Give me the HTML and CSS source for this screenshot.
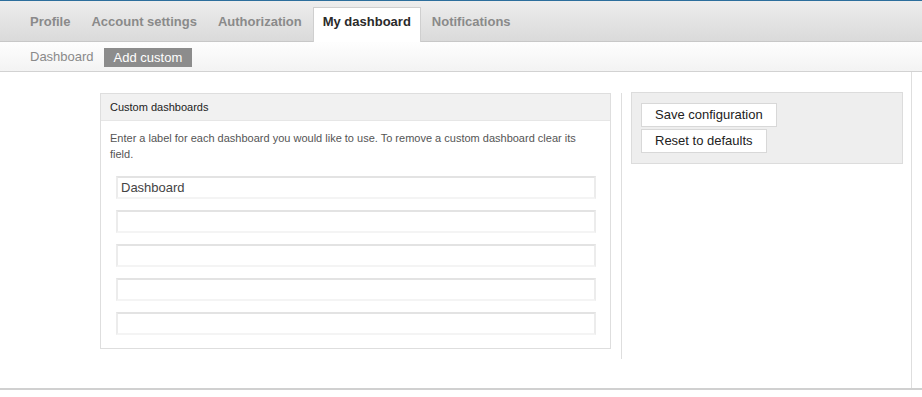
FILE: index.html
```html
<!DOCTYPE html>
<html>
<head>
<meta charset="utf-8">
<link rel="stylesheet" href="styles.css">
</head>
<body>
<div class="topline"></div>
<nav class="tabs">
  <a class="tab">Profile</a>
  <a class="tab">Account settings</a>
  <a class="tab">Authorization</a>
  <a class="tab active">My dashboard</a>
  <a class="tab">Notifications</a>
</nav>
<nav class="subtabs">
  <a class="subtab">Dashboard</a>
  <a class="subtab current">Add custom</a>
</nav>
<div class="page">
  <div class="content">
    <section class="panel">
      <div class="panel-head">Custom dashboards</div>
      <div class="panel-body">
        <p class="help">Enter a label for each dashboard you would like to use. To remove a custom dashboard clear its field.</p>
        <div class="fields">
          <input class="field" type="text" value="Dashboard">
          <input class="field" type="text" value="">
          <input class="field" type="text" value="">
          <input class="field" type="text" value="">
          <input class="field" type="text" value="">
        </div>
      </div>
    </section>
    <aside class="sidebar">
      <div class="actions">
        <button class="btn">Save configuration</button>
        <button class="btn">Reset to defaults</button>
      </div>
    </aside>
  </div>
</div>
</body>
</html>
```
FILE: styles.css
```css
* { box-sizing: border-box; }
html, body { margin: 0; padding: 0; background: #fff; }
body { font-family: "Liberation Sans", Arial, Helvetica, sans-serif; color: #333; width: 922px; height: 397px; overflow: hidden; }

.topline { height: 1px; background: #2c6e9c; }

.tabs {
  display: flex;
  align-items: flex-end;
  height: 41px;
  padding-left: 20px;
  background: linear-gradient(#ededed, #dadada);
  border-bottom: 1px solid #c8c8c8;
}
.tab {
  font-size: 13px;
  font-weight: bold;
  color: #8a8a8a;
  padding: 0 9px;
  margin-right: 1px;
  height: 34px;
  line-height: 28px;
  border: 1px solid transparent;
  border-bottom: none;
}
.tab.active {
  background: #fff;
  color: #2a2a2a;
  border-color: #cfcfcf;
  height: 35px;
  margin-bottom: -1px;
}

.subtabs {
  display: flex;
  align-items: center;
  height: 30px;
  padding-left: 30px;
  background: linear-gradient(#fefefe, #f3f3f3);
  border-bottom: 1px solid #d2d2d2;
}
.subtab {
  font-size: 13px;
  color: #8a8a8a;
  margin-right: 10px;
  line-height: 19px;
}
.subtab.current {
  background: #8c8c8c;
  color: #fff;
  padding: 0 10px;
  margin-top: 1px;
}

.page {
  width: 922px;
  height: 318px;
  border-bottom: 2px solid #d0d0d0;
}
.content {
  display: flex;
  align-items: flex-start;
  width: 912px;
  height: 100%;
  border-right: 1px solid #dedede;
  padding: 21px 0 0 100px;
}

.panel {
  width: 511px;
  border: 1px solid #dedede;
}
.panel-head {
  height: 27px;
  line-height: 26px;
  padding-left: 9px;
  font-size: 11px;
  color: #222;
  background: #f1f1f1;
  border-bottom: 1px solid #e6e6e6;
}
.panel-body {
  padding: 9px 14px 13px 9px;
}
.help {
  margin: 0;
  font-size: 11px;
  line-height: 16px;
  color: #555;
}
.fields {
  display: flex;
  flex-direction: column;
  gap: 11px;
  padding: 14px 0 0 6px;
}
.field {
  display: block;
  width: 480px;
  height: 23px;
  margin: 0;
  padding: 0 0 0 3px;
  font-family: "Liberation Sans", Arial, sans-serif;
  font-size: 13px;
  color: #444;
  background: #fff;
  border: 2px solid #ececec;
  border-top-color: #e3e3e3;
  border-bottom-color: #f4f4f4;
  outline: none;
}

.sidebar {
  margin-left: 10px;
  height: 266px;
  border-left: 1px solid #dedede;
  padding-left: 9px;
}
.actions {
  width: 272px;
  margin-top: -1px;
  background: #eeeeee;
  border: 1px solid #dcdcdc;
  padding: 10px 9px 10px 9px;
  display: flex;
  flex-direction: column;
  align-items: flex-start;
  gap: 2px;
}
.btn {
  font-family: "Liberation Sans", Arial, sans-serif;
  font-size: 13px;
  color: #222;
  background: #fff;
  border: 1px solid #d8d8d8;
  height: 24px;
  padding: 0 13px;
  margin: 0;
  line-height: 22px;
}
```
